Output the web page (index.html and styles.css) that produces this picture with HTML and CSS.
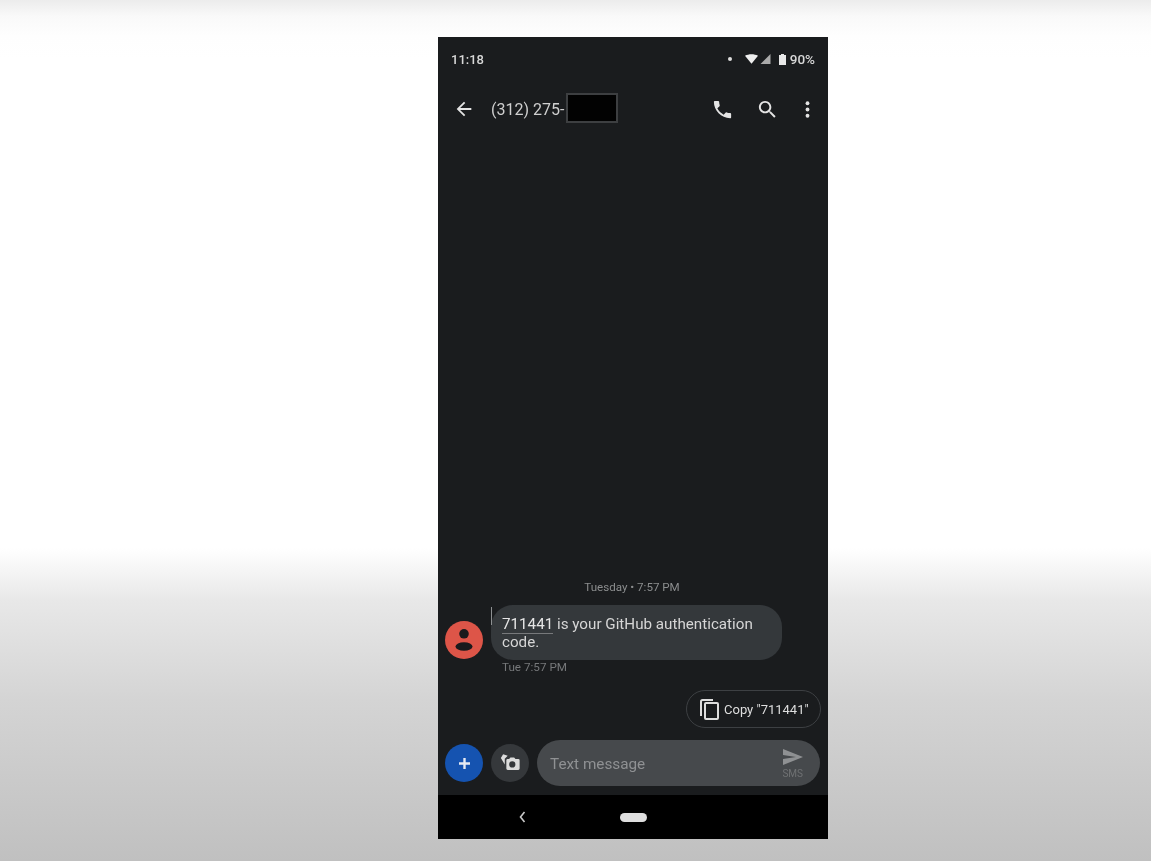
FILE: index.html
```html
<!DOCTYPE html>
<html lang="en">
<head>
<meta charset="utf-8">
<title>Messages</title>
<link rel="stylesheet" href="styles.css">
</head>
<body>
<main class="phone">
  <div class="status">
    <span class="clock">11:18</span>
    <div class="status-right">
      <span class="dot"></span>
      <svg class="wifi" viewBox="0 0 14 10"><path d="M0 1.500C4-.7 10-.7 14 1.500L7 10z"/></svg>
      <svg class="signal" viewBox="0 0 10 10"><path d="M10 0v10H0z"/></svg>
      <svg class="battery" viewBox="0 0 7 11"><path d="M2 0h3v1h2v10H0V1h2z"/></svg>
      <span class="pct">90%</span>
    </div>
  </div>
  <header class="appbar">
    <svg class="back" viewBox="0 0 24 24"><path d="M20 11H7.800l5.600-5.600L12 4l-8 8 8 8 1.400-1.400L7.800 13H20z"/></svg>
    <span class="title">(312) 275-</span>
    <span class="redact"></span>
    <div class="actions">
      <svg class="act" viewBox="0 0 24 24"><path d="M6.600 10.800c1.400 2.800 3.800 5.100 6.600 6.600l2.200-2.200c.3-.3.7-.4 1-.2 1.100.4 2.300.6 3.600.6.600 0 1 .4 1 1V20c0 .6-.4 1-1 1C10.600 21 3 13.400 3 4c0-.6.400-1 1-1h3.500c.6 0 1 .4 1 1 0 1.300.2 2.500.6 3.600.1.300 0 .7-.2 1z"/></svg>
      <svg class="act" viewBox="0 0 24 24"><path d="M15.500 14h-.8l-.3-.3c1-1.100 1.600-2.600 1.600-4.200C16 5.900 13.100 3 9.500 3S3 5.900 3 9.500 5.900 16 9.500 16c1.600 0 3.100-.6 4.200-1.600l.3.300v.8l5 5 1.500-1.500zm-6 0C7 14 5 12 5 9.500S7 5 9.500 5 14 7 14 9.500 12 14 9.500 14z"/></svg>
      <svg class="act act-more" viewBox="0 0 24 24"><circle cx="12" cy="5.500" r="2"/><circle cx="12" cy="12" r="2"/><circle cx="12" cy="18.500" r="2"/></svg>
    </div>
  </header>
  <section class="thread">
    <div class="day">Tuesday • 7:57 PM</div>
    <div class="msg">
      <div class="avatar">
        <svg viewBox="0 0 38 38"><circle cx="19" cy="12.800" r="4.800"/><ellipse cx="19" cy="25.500" rx="8.500" ry="4.300"/></svg>
      </div>
      <div class="bubble">
        <div class="line"><span class="code">711441</span><span>&nbsp;is your GitHub authentication</span></div>
        <div class="line">code.</div>
      </div>
    </div>
    <div class="meta">Tue 7:57 PM</div>
    <div class="suggest">
      <div class="chip">
        <svg class="copy" viewBox="0 0 22 24"><path d="M4.500 2H15v2H4.500A.5.500 0 0 0 4 4.500V19H2V4.500A2.500 2.500 0 0 1 4.500 2z"/><path fill-rule="evenodd" d="M8 5h11a2 2 0 0 1 2 2v14a2 2 0 0 1-2 2H8a2 2 0 0 1-2-2V7a2 2 0 0 1 2-2zm0 2v14h11V7z"/></svg>
        <span>Copy "711441"</span>
      </div>
    </div>
  </section>
  <div class="composer">
    <div class="round plus">
      <svg viewBox="0 0 12 12"><path d="M4.700 0h2.600v4.700H12v2.600H7.300V12H4.700V7.300H0V4.700h4.700z"/></svg>
    </div>
    <div class="round cam">
      <svg viewBox="0 0 24 24"><path d="M4.500 2.500l5 1.600-3.200 3.300v6.200L2 6.500z"/><path fill-rule="evenodd" d="M11 7.500l1.500-1.500h4l1.500 1.500h3a1.500 1.500 0 0 1 1.500 1.500v9a1.500 1.500 0 0 1-1.500 1.500H9.500A1.500 1.500 0 0 1 8 18V9a1.500 1.500 0 0 1 1.500-1.500zm3.500 2.600a3.400 3.400 0 1 0 0 6.800 3.400 3.400 0 0 0 0-6.800z"/></svg>
    </div>
    <div class="field">
      <span class="placeholder">Text message</span>
      <div class="send">
        <svg viewBox="0 0 20 16"><path d="M0 0l20 8-20 8v-6l13-2-13-2z"/></svg>
        <span>SMS</span>
      </div>
    </div>
  </div>
  <nav class="navbar">
    <svg class="chev" viewBox="0 0 7 12"><path d="M5.500 1L1.500 6l4 5" /></svg>
    <span class="home"></span>
  </nav>
</main>
</body>
</html>
```
FILE: styles.css
```css
* { box-sizing: border-box; }
html, body { margin: 0; height: 861px; overflow: hidden; }
body {
  padding: 37px 0 22px 438px;
  background: linear-gradient(to bottom, #ececec 0, #f9f9f9 16px, #fefefe 36px, #fff 60px, #fff 548px, #e8e8e8 600px, #d4d4d4 700px, #c0c0c0 861px);
  font-family: Roboto, "Liberation Sans", sans-serif;
  color: #dcdcdc;
}
.phone {
  width: 390px;
  height: 802px;
  background: #1a1c1e;
  display: flex;
  flex-direction: column;
  filter: blur(0.45px);
}
svg { fill: currentColor; display: block; }

.status {
  height: 44px;
  padding: 0 13px;
  display: flex;
  align-items: center;
  justify-content: space-between;
  font-size: 13px;
  font-weight: 500;
  color: #d8d8d8;
}
.status-right { display: flex; align-items: center; }
.dot { width: 4px; height: 4px; border-radius: 50%; background: #ddd; margin-right: 13px; }
.wifi { width: 13px; height: 10px; margin-right: 2px; color: #eee; }
.signal { width: 11px; height: 10px; margin-right: 8px; color: #aaa; }
.battery { width: 7px; height: 11px; margin-right: 4px; color: #e8e8e8; }
.pct { font-size: 13.500px; }

.appbar {
  height: 56px;
  padding: 0 9px 0 15px;
  display: flex;
  align-items: center;
  color: #e4e4e4;
}
.back { width: 22px; height: 22px; margin-right: 16px; }
.title { font-size: 16px; color: #cfcfcf; width: 75px; white-space: nowrap; }
.redact { width: 52px; height: 30px; margin-bottom: 2px; background: #020202; border: 2px solid #3d3f41; }
.actions { margin-left: auto; display: flex; gap: 22px; }
.act { width: 23px; height: 23px; }
.act-more { margin-left: -5px; }

.thread {
  flex: 1;
  display: flex;
  flex-direction: column;
  justify-content: flex-end;
  padding-left: 7px;
  padding-right: 7px;
}
.day { text-align: center; font-size: 11.600px; line-height: 14px; color: #8b8d8e; margin-bottom: 11px; padding-right: 2px; }
.msg { display: flex; align-items: flex-end; gap: 8px; }
.avatar {
  width: 38px;
  height: 38px;
  border-radius: 50%;
  background: #dd5548;
  color: #1a1a1c;
}
.bubble {
  position: relative;
  width: 291px;
  height: 55px;
  margin-bottom: -1px;
  padding: 10px 12px 0 11px;
  background: #34383b;
  border-radius: 22px;
  font-size: 15.200px;
  line-height: 18px;
  color: #d6d6d6;
}
.bubble::before {
  content: "";
  position: absolute;
  left: 0;
  top: 2px;
  width: 1px;
  height: 18px;
  background: #8d9092;
}
.line { display: flex; white-space: nowrap; }
.code { color: #e6e6e6; box-shadow: 0 1px 0 #77797b; }
.meta { margin: 1px 0 0 57px; font-size: 11.700px; line-height: 14px; color: #76787a; }
.suggest { display: flex; justify-content: flex-end; margin-top: 16px; }
.chip {
  width: 135px;
  height: 38px;
  border: 1px solid #3d4043;
  border-radius: 19px;
  display: flex;
  align-items: center;
  padding-left: 11px;
  font-size: 13px;
  white-space: nowrap;
  color: #dedede;
}
.copy { width: 22px; height: 24px; margin-right: 4px; }

.composer {
  height: 67px;
  padding: 12px 8px 9px 7px;
  display: flex;
  align-items: center;
  gap: 8px;
}
.round {
  flex: none;
  width: 38px;
  height: 38px;
  border-radius: 50%;
  display: flex;
  align-items: center;
  justify-content: center;
}
.plus { background: #1553b0; color: #e6eaf2; }
.plus svg { width: 11px; height: 11px; }
.cam { background: #35383b; color: #dcdcdc; }
.cam svg { width: 22px; height: 22px; }
.field {
  flex: 1;
  height: 46px;
  border-radius: 23px;
  background: #46494c;
  display: flex;
  align-items: center;
  justify-content: space-between;
  padding: 0 17px 0 13px;
}
.placeholder { font-size: 15.300px; color: #8f9193; padding-top: 2px; }
.send { display: flex; flex-direction: column; align-items: center; color: #6f7173; font-size: 10px; line-height: 12px; padding-top: 3px; }
.send svg { width: 20px; height: 16px; margin-bottom: 3px; color: #8f9193; }

.navbar {
  height: 44px;
  background: #000;
  display: flex;
  align-items: center;
  padding-left: 81px;
}
.chev { width: 7px; height: 12px; fill: none; stroke: #c8c8c8; stroke-width: 1.600; margin-right: 94px; }
.home { width: 27px; height: 9px; border-radius: 5px; background: #dedede; }
```
